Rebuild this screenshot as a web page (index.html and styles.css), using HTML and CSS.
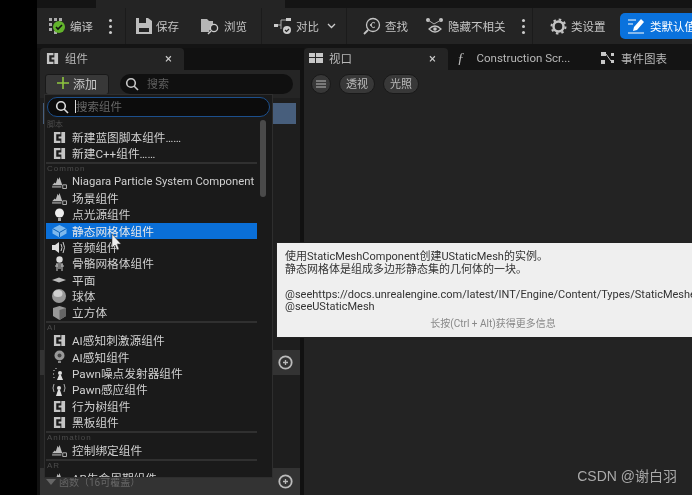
FILE: index.html
```html
<!DOCTYPE html>
<html lang="zh-CN">
<head>
  <meta charset="UTF-8">
  <title>组件</title>
  <link rel="stylesheet" href="styles.css">
</head>
<body>
  <svg class="defs" width="0" height="0">
    <symbol id="c-icon" viewBox="0 0 14 14"><path d="M1 1h7v2.500H3.500v7H8V13H1z M9 1h4v12H9V8H6V6h3z" fill="#c4c4c4"/></symbol>
    <symbol id="mesh" viewBox="0 0 16 14"><path d="M0 10l3-3 1 1 2-6 1 2 1-3 2 6 1 3H0z" fill="#bbb"/><path d="M0 11h10v1.500H0z" fill="#999"/><path d="M11.500 9.500h4v4h-4z" fill="none" stroke="#bbb"/></symbol>
    <symbol id="scan" viewBox="0 0 14 14"><circle cx="6" cy="6" r="4.300" fill="none" stroke="currentColor" stroke-width="1.600"/><path d="M9 9l4 4" stroke="currentColor" stroke-width="1.600"/></symbol>
    <symbol id="ring" viewBox="0 0 15 15"><circle cx="7.500" cy="7.500" r="6.200" fill="none" stroke="#bbb" stroke-width="1.800"/><path d="M5 7.500h5M7.500 5v5" stroke="#bbb" stroke-width="1.300"/></symbol>
  </svg>

  <div class="app">
    <div class="left-strip"></div>
    <div class="main">
      <div class="title-row"><div class="title-tab"></div></div>

      <div class="toolbar">
        <div class="tool-group tg-compile">
          <svg width="18" height="18" viewBox="0 0 18 18"><path d="M1 1h3v3H1zM6 1h3v3H6zM11 1h3v3h-3zM1 6h3v3H1zM1 11h3v3H1zM6 14h3v3H6z" fill="#aaa"/><circle cx="11" cy="10" r="6" fill="#62b32c"/><path d="M8 10l2 2 4-4" fill="none" stroke="#111" stroke-width="1.600"/></svg>
          <span>编译</span><span class="dots"></span>
        </div>
        <div class="tool-group tg-save">
          <svg width="16" height="16" viewBox="0 0 16 16"><path d="M0 0h12l4 3v13H0z" fill="#bdbdbd"/><path d="M3 0h7v5H3zM3 10h10v4H3z" fill="#242424"/></svg>
          <span>保存</span>
        </div>
        <div class="tool-group tg-browse">
          <svg width="19" height="17" viewBox="0 0 19 17"><path d="M0 1h6l2 2h4v5l-4 5v1H0z" fill="#b5b5b5"/><circle cx="13" cy="10" r="3.600" fill="#242424" stroke="#ccc" stroke-width="1.300"/><path d="M10 13l-3 3" stroke="#ccc" stroke-width="1.500"/></svg>
          <span>浏览</span>
        </div>
        <div class="tool-group tg-diff">
          <svg width="18" height="17" viewBox="0 0 18 17"><path d="M0 6h4v3H0zM12 0h5v3h-5z" fill="#ccc"/><path d="M4 7h3V2h5M7 7v4" fill="none" stroke="#aaa"/><circle cx="13" cy="12" r="4" fill="#ccc"/><path d="M11 12l1.500 1.500 2.500-2.500" fill="none" stroke="#222" stroke-width="1.200"/></svg>
          <span>对比</span>
          <svg class="chevron" width="9" height="6" viewBox="0 0 9 6"><path d="M1 1l3.500 3.500L8 1" fill="none" stroke="#ccc" stroke-width="1.300"/></svg>
        </div>
        <div class="tool-group tg-find">
          <svg width="18" height="18" viewBox="0 0 18 18"><circle cx="10" cy="8" r="6.500" fill="none" stroke="#c4c4c4" stroke-width="1.300"/><path d="M5 13l-4 4" stroke="#c4c4c4" stroke-width="1.800"/><path d="M12 6a2.500 2.500 0 1 0 0 4" fill="none" stroke="#c4c4c4"/><circle cx="8" cy="8" r="1" fill="#c4c4c4"/></svg>
          <span>查找</span>
        </div>
        <div class="tool-group tg-hide">
          <svg width="18" height="16" viewBox="0 0 18 16"><circle cx="2" cy="2" r="2" fill="#c4c4c4"/><circle cx="15" cy="2" r="2" fill="#c4c4c4"/><path d="M2 2l6 4 7-4" fill="none" stroke="#aaa"/><path d="M3 11q6-6 12 0q-6 6-12 0z" fill="none" stroke="#c4c4c4" stroke-width="1.200"/><circle cx="9" cy="11" r="1.800" fill="#c4c4c4"/></svg>
          <span>隐藏不相关</span><span class="dots"></span>
        </div>
        <div class="tool-group tg-settings">
          <svg width="17" height="17" viewBox="0 0 17 17"><circle cx="8.500" cy="8.500" r="5" fill="none" stroke="#c4c4c4" stroke-width="2.500"/><circle cx="8.500" cy="8.500" r="7" fill="none" stroke="#c4c4c4" stroke-width="2" stroke-dasharray="2.500 3"/></svg>
          <span>类设置</span>
        </div>
        <div class="blue-btn">
          <svg width="17" height="15" viewBox="0 0 17 15"><path d="M0 1h8M0 5h5M0 14h16" stroke="#fff" stroke-width="1.200"/><path d="M13 0l3 3-7 8-4 1 1-4z" fill="#fff"/></svg>
          <span>类默认值</span>
        </div>
      </div>

      <div class="gap-row"></div>

      <div class="work">
        <div class="comp-col">
          <div class="tab tab-active comp-tab">
            <svg width="13" height="13"><use href="#c-icon"/></svg>
            <span>组件</span><span class="close">×</span>
          </div>
          <div class="comp-panel">
            <div class="comp-bar">
              <button class="add-btn">
                <svg width="12" height="12" viewBox="0 0 12 12"><path d="M6 0v12M0 6h12" stroke="#8ec63f" stroke-width="1.600"/></svg>添加
              </button>
              <div class="comp-search">
                <svg width="14" height="14"><use href="#scan"/></svg><span>搜索</span>
              </div>
            </div>
            <div class="under-list">
              <div class="selected-row"></div>
              <div class="under-section sec-a"><svg width="15" height="15"><use href="#ring"/></svg></div>
              <div class="under-section sec-b">
                <span class="fn-label"><i class="tri"></i>函数（16可覆盖）</span>
                <svg width="15" height="15"><use href="#ring"/></svg>
              </div>
            </div>
          </div>
        </div>

        <div class="view-col">
          <div class="tabs">
            <div class="tab tab-active view-tab">
              <svg width="14" height="10" viewBox="0 0 14 10"><path d="M0 0h6v4H0zM7 0h7v4H7zM0 5h6v5H0zM7 5h7v5H7z" fill="#c8c8c8"/></svg>
              <span>视口</span><span class="close">×</span>
            </div>
            <div class="tab cs-tab"><i class="fx">ƒ</i><span>Construction Scr...</span></div>
            <div class="tab ev-tab">
              <svg width="13" height="12" viewBox="0 0 13 12"><path d="M0 0h5v4H0zM0 8h4v4H0zM10 1h3v3h-3zM10 8h3v3h-3z" fill="#c8c8c8"/><path d="M5 2l5 7" stroke="#c8c8c8"/></svg>
              <span>事件图表</span>
            </div>
          </div>
          <div class="viewport">
            <div class="view-bar">
              <span class="round-btn menu-btn"><svg width="10" height="8" viewBox="0 0 10 8"><path d="M0 1h10M0 4h10M0 7h10" stroke="#bbb"/></svg></span>
              <span class="round-btn">透视</span>
              <span class="round-btn">光照</span>
            </div>
          </div>
        </div>
      </div>
    </div>
  </div>

  <!-- Dropdown -->
  <div class="menu">
    <div class="menu-search">
      <svg width="14" height="14"><use href="#scan"/></svg>
      <span class="caret"></span><span>搜索组件</span>
    </div>
    <div class="menu-body">
      <div class="menu-list">
        <div class="cat">脚本</div>
        <div class="item"><svg width="13" height="13"><use href="#c-icon"/></svg><span>新建蓝图脚本组件……</span></div>
        <div class="item"><svg width="13" height="13"><use href="#c-icon"/></svg><span>新建C++组件……</span></div>
        <div class="sep"></div>
        <div class="cat latin">Common</div>
        <div class="item item-long"><svg width="15" height="13"><use href="#mesh"/></svg><span>Niagara Particle System Component</span></div>
        <div class="item"><svg width="15" height="13"><use href="#mesh"/></svg><span>场景组件</span></div>
        <div class="item"><svg width="13" height="14" viewBox="0 0 13 14"><circle cx="6.500" cy="5" r="4.500" fill="#eee"/><path d="M5 10h3v3H5z" fill="#aaa"/></svg><span>点光源组件</span></div>
        <div class="item active"><svg width="15" height="14" viewBox="0 0 15 14"><path d="M7.500 1l7 3.500v5l-7 4-7-4v-5z" fill="#7db9ee"/><path d="M.5 4.500l7 4 7-4M7.500 8.500V13" fill="none" stroke="#0a5fb5"/></svg><span>静态网格体组件</span></div>
        <div class="item"><svg width="14" height="13" viewBox="0 0 14 13"><path d="M0 4h3l4-3v11L3 9H0z" fill="#ddd"/><path d="M9 3q2 3.500 0 7M11 1q3 5.500 0 11" fill="none" stroke="#ccc"/></svg><span>音频组件</span></div>
        <div class="item"><svg width="13" height="15" viewBox="0 0 13 15"><circle cx="6.500" cy="3.500" r="3.200" fill="#ddd"/><path d="M3 8h7M2 10h9M5 12h3M4 8v7M9 8v7" stroke="#ccc"/></svg><span>骨骼网格体组件</span></div>
        <div class="item"><svg width="14" height="6" viewBox="0 0 14 6"><path d="M0 3l7-2.500L14 3 7 5.500z" fill="#bbb"/></svg><span>平面</span></div>
        <div class="item"><svg width="14" height="14" viewBox="0 0 14 14"><circle cx="7" cy="7" r="7" fill="#999"/><ellipse cx="6" cy="4.500" rx="4.500" ry="3.500" fill="#d0d0d0"/></svg><span>球体</span></div>
        <div class="item"><svg width="13" height="14" viewBox="0 0 13 14"><path d="M0 2l6.500-2L13 2v8l-6.500 4L0 10z" fill="#999"/><path d="M6.500 4L13 2v8l-6.500 4z" fill="#666"/></svg><span>立方体</span></div>
        <div class="sep"></div>
        <div class="cat latin">AI</div>
        <div class="item"><svg width="13" height="13"><use href="#c-icon"/></svg><span>AI感知刺激源组件</span></div>
        <div class="item"><svg width="13" height="14" viewBox="0 0 13 14"><circle cx="6.500" cy="5.500" r="5" fill="#999"/><circle cx="6.500" cy="5.500" r="2" fill="#444"/><path d="M5 11h3v2H5z" fill="#888"/></svg><span>AI感知组件</span></div>
        <div class="item"><svg width="14" height="14" viewBox="0 0 14 14"><circle cx="8" cy="6" r="2" fill="#ddd"/><path d="M5 13h6l-2-5H7z" fill="#ddd"/><path d="M2 3v1M1 7h1M2 10v1M4 1v1" stroke="#ddd"/></svg><span>Pawn噪点发射器组件</span></div>
        <div class="item"><svg width="14" height="14" viewBox="0 0 14 14"><circle cx="7" cy="5" r="2" fill="#ddd"/><path d="M4 13h6L8 7H6z" fill="#ddd"/><path d="M2 1Q0 5 2 9M12 1q2 4 0 8" fill="none" stroke="#aaa"/></svg><span>Pawn感应组件</span></div>
        <div class="item"><svg width="13" height="13"><use href="#c-icon"/></svg><span>行为树组件</span></div>
        <div class="item"><svg width="13" height="13"><use href="#c-icon"/></svg><span>黑板组件</span></div>
        <div class="sep"></div>
        <div class="cat latin">Animation</div>
        <div class="item"><svg width="15" height="13"><use href="#mesh"/></svg><span>控制绑定组件</span></div>
        <div class="sep"></div>
        <div class="cat latin">AR</div>
        <div class="item"><svg width="15" height="13"><use href="#mesh"/></svg><span>AR生命周期组件</span></div>
      </div>
      <div class="scroll-track"><div class="scroll-thumb"></div></div>
    </div>
  </div>

  <svg class="cursor" width="12" height="17" viewBox="0 0 12 17"><path d="M1 0v14l3-3 2 5 2-1-2-5h4z" fill="#eee" stroke="#333" stroke-width=".5"/></svg>

  <!-- Tooltip -->
  <div class="tooltip">
    <p>使用StaticMeshComponent创建UStaticMesh的实例。<br>静态网格体是组成多边形静态集的几何体的一块。</p>
    <p>@seehttps://docs.unrealengine.com/latest/INT/Engine/Content/Types/StaticMeshes/<br>@seeUStaticMesh</p>
    <p class="tip-hint">长按(Ctrl + Alt)获得更多信息</p>
  </div>

  <div class="watermark">CSDN @谢白羽</div>
</body>
</html>
```

FILE: styles.css
```css
/* Base */
body {
  margin: 0;
  width: 692px;
  height: 495px;
  overflow: hidden;
  position: relative;
  background: #1e1e1e;
  font-family: "Roboto", "Noto Sans CJK SC", sans-serif;
  font-size: 11.5px;
  color: #c4c4c4;
  filter: blur(0.4px);
}

.defs {
  position: absolute;
}

.app {
  display: flex;
  height: 495px;
}

.left-strip {
  width: 37px;
  background: #000;
}

.main {
  flex: 1;
  display: flex;
  flex-direction: column;
  min-width: 0;
}

/* Top */
.title-row {
  height: 8px;
  background: #141414;
  padding-left: 59px;
}

.title-tab {
  width: 189px;
  height: 8px;
  background: #242424;
}

.toolbar {
  height: 36px;
  background: #242424;
  display: flex;
  align-items: center;
  overflow: hidden;
  white-space: nowrap;
}

.tool-group {
  display: flex;
  align-items: center;
  gap: 4px;
  height: 36px;
  flex: none;
  box-sizing: border-box;
  border-right: 1px solid #1b1b1b;
}

.tool-group span,
.blue-btn span {
  margin-top: -1px;
}

.tg-compile { width: 89px; padding-left: 11px; }
.tg-save { width: 75px; padding-left: 10px; border-right: none; }
.tg-browse { width: 61px; }
.tg-diff { width: 85px; padding-left: 12px; }
.tg-find { width: 79px; padding-left: 16px; border-right: none; }
.tg-hide { width: 107px; }
.tg-settings { width: 87px; padding-left: 17px; border-right: none; }

.chevron {
  margin-left: 4px;
}

.tool-group .dots {
  width: 3px;
  height: 3px;
  margin: 0 0 0 12px;
  border-radius: 50%;
  background: #ccc;
  box-shadow: 0 -6px 0 #ccc, 0 6px 0 #ccc;
}

.blue-btn {
  flex: none;
  width: 90px;
  height: 26px;
  box-sizing: border-box;
  padding-left: 8px;
  display: flex;
  align-items: center;
  gap: 5px;
  background: #0a72dd;
  border-radius: 5px 0 0 5px;
  color: #fff;
}

.gap-row {
  height: 4px;
  background: #141414;
}

/* Panels */
.work {
  flex: 1;
  display: flex;
  gap: 4px;
  background: #111;
}

.comp-col {
  width: 263px;
  box-sizing: border-box;
  padding-left: 3px;
  display: flex;
  flex-direction: column;
}

.view-col {
  flex: 1;
  display: flex;
  flex-direction: column;
  min-width: 0;
}

.tab {
  height: 22px;
  padding-bottom: 2px;
  display: flex;
  align-items: center;
  gap: 6px;
  box-sizing: border-box;
  flex: none;
  white-space: nowrap;
  color: #b8b8b8;
}

.tab-active {
  background: #242424;
  border-radius: 4px 4px 0 0;
}

.comp-tab {
  width: 144px;
  padding-left: 6px;
}

.view-tab {
  width: 144px;
  padding-left: 5px;
}

.tab .close {
  margin-left: auto;
  margin-right: 12px;
  color: #ccc;
  font-size: 13px;
  line-height: 1;
}

.tabs {
  display: flex;
  background: #141414;
}

.cs-tab { width: 149px; padding-left: 9px; gap: 12px; }
.ev-tab { padding-left: 4px; gap: 7px; }

.fx {
  font-family: "Liberation Serif", serif;
  font-size: 15px;
}

.comp-panel {
  flex: 1;
  background: #252525;
  display: flex;
  flex-direction: column;
}

.comp-bar {
  display: flex;
  align-items: center;
  gap: 11px;
  height: 28px;
  padding-left: 5px;
}

.add-btn {
  width: 64px;
  height: 21px;
  padding: 0 0 2px;
  border: 1px solid #191919;
  border-radius: 3px;
  background: #383838;
  color: #c8c8c8;
  font: inherit;
  font-size: 12px;
  display: flex;
  align-items: center;
  justify-content: center;
  gap: 4px;
}

.comp-search {
  width: 173px;
  height: 20px;
  padding-left: 5px;
  box-sizing: border-box;
  display: flex;
  align-items: center;
  gap: 8px;
  background: #101010;
  border-radius: 10px;
  color: #5e5e5e;
  font-size: 11px;
}

.comp-search svg {
  color: #c8c8c8;
}

.comp-search span {
  margin-top: -2px;
}

.under-list {
  flex: 1;
  position: relative;
  background: #1e1e1e;
}

.selected-row {
  height: 21px;
  margin: 5px 4px 0 3px;
  background: #475e7c;
}

.under-section {
  position: absolute;
  left: 0;
  right: 0;
  background: #333;
  display: flex;
  justify-content: flex-end;
  align-items: center;
  padding-right: 7px;
}

.sec-a { top: 252px; height: 25px; }
.sec-b { top: 370px; height: 27px; justify-content: space-between; }

.fn-label {
  padding: 0 0 0 6px;
  display: flex;
  align-items: center;
  gap: 3px;
  font-size: 10px;
  color: #666;
}

.tri {
  width: 0;
  height: 0;
  border: 5px solid transparent;
  border-top: 6px solid #666;
  border-bottom: none;
}

.viewport {
  flex: 1;
  background: #232323;
}

.view-bar {
  display: flex;
  align-items: center;
  gap: 8px;
  height: 28px;
  padding-left: 7px;
}

.round-btn {
  height: 20px;
  padding: 0 6px 2px;
  display: flex;
  align-items: center;
  background: #383838;
  border: 1px solid #191919;
  border-radius: 10px;
  box-sizing: border-box;
  color: #bbb;
  font-size: 11px;
}

.menu-btn {
  width: 20px;
  padding: 0;
  justify-content: center;
}

/* Dropdown */
.menu {
  position: absolute;
  left: 44px;
  top: 94px;
  width: 229px;
  height: 384px;
  box-sizing: border-box;
  background: #1a1a1a;
  border: 1px solid #2e2e2e;
  overflow: hidden;
}

.menu-search {
  height: 20px;
  margin: 2px 2px 0 2px;
  padding: 0 0 1px 7px;
  box-sizing: border-box;
  display: flex;
  align-items: center;
  background: #0c0c0c;
  border: 1px solid #1c4f8c;
  border-radius: 10px;
  color: #666;
}

.menu-search svg {
  color: #ddd;
  margin-right: 6px;
}

.menu-search span:last-child {
  margin-top: -2px;
}

.caret {
  width: 1px;
  height: 13px;
  background: #ddd;
}

.menu-body {
  display: flex;
  padding: 2.5px 0 0 1px;
}

.menu-list {
  width: 211px;
  flex: none;
  overflow: hidden;
}

.cat {
  height: 10px;
  line-height: 10px;
  font-size: 8px;
  color: #4c4c4c;
  padding-left: 1px;
}

.latin {
  letter-spacing: 1px;
  font-family: "Liberation Sans", sans-serif;
}

.item {
  height: 16.3px;
  display: grid;
  grid-template-columns: 26px 1fr;
  align-items: center;
  justify-items: center;
  white-space: nowrap;
  overflow: hidden;
  font-size: 11.7px;
  color: #d0d0d0;
}

.item span {
  justify-self: start;
  max-width: 185px;
  overflow: hidden;
  margin-top: -2px;
}

.item-long {
  font-size: 11.3px;
}

.item.active {
  background: #0a6fd8;
  color: #e8e8e8;
}

.sep {
  height: 2px;
  background: #303030;
}

.scroll-track {
  width: 7px;
  margin-left: 3px;
  padding-top: 0;
}

.scroll-thumb {
  width: 6px;
  height: 77px;
  border-radius: 3px;
  background: #4a4a4a;
}

.cursor {
  position: absolute;
  left: 111px;
  top: 234px;
}

/* Tooltip */
.tooltip {
  position: absolute;
  left: 276px;
  top: 242px;
  width: 430px;
  height: 96px;
  box-sizing: border-box;
  padding: 8px 8px;
  background: #efefef;
  border: 1px solid #222;
  color: #333;
  font-family: "Roboto", "Noto Sans CJK SC", sans-serif;
  font-size: 11px;
  line-height: 12.500px;
  white-space: nowrap;
}

.tooltip p {
  margin: 0 0 12.500px;
}

.tooltip .tip-hint {
  width: 416px;
  text-align: center;
  color: #888;
  font-size: 10px;
  margin-top: -8px;
}

.watermark {
  position: absolute;
  right: 15px;
  top: 465px;
  font-family: "Liberation Sans", "Noto Sans CJK SC", sans-serif;
  font-size: 14px;
  color: #aaa;
}
```
